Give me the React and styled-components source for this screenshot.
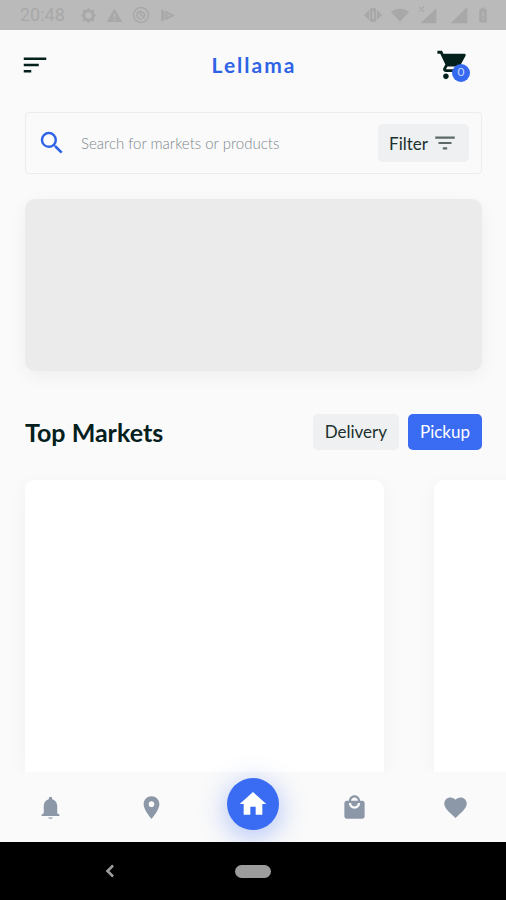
import React from "react";
import styled, { createGlobalStyle } from "styled-components";

const GlobalStyle = createGlobalStyle`
  *, *::before, *::after { box-sizing: border-box; }
  body { margin: 0; background: #fafafa; font-family: Lato, "Open Sans", sans-serif; color: #04201d; }
  button, input { font: inherit; color: inherit; border: 0; margin: 0; padding: 0; background: none; }
  button { cursor: pointer; }
`;

const Screen = styled.div`
  display: flex;
  flex-direction: column;
  min-height: 100vh;
  overflow: hidden;
`;

const StatusBar = styled.div`
  display: flex;
  align-items: center;
  justify-content: space-between;
  height: 30px;
  padding: 0 14px 0 20px;
  background: #bababa;
  color: #a8a8a8;
`;

const StatusGroup = styled.div`
  display: flex;
  align-items: center;
  gap: ${(p) => p.$gap}px;
`;

const Clock = styled.span`
  margin-right: 6px;
  font: 400 18px/30px Roboto, sans-serif;
`;

const Header = styled.header`
  display: grid;
  grid-template-columns: 1fr auto 1fr;
  align-items: center;
  height: 70px;
  padding: 0 36px 0 20px;
`;

const HeaderButton = styled.button`
  display: flex;
  position: relative;
  justify-self: ${(p) => p.$side};
`;

const Brand = styled.h1`
  margin: 0 0 0 18px;
  color: #2f63e6;
  font-size: 21px;
  line-height: 28px;
  font-weight: 700;
  letter-spacing: 2px;
`;

const Badge = styled.span`
  position: absolute;
  right: 0;
  bottom: 0;
  width: 18px;
  height: 18px;
  border-radius: 50%;
  background: #3569f0;
  color: #c9d8ff;
  font-size: 12px;
  line-height: 16px;
  text-align: center;
`;

const Svg = styled.svg`
  display: block;
  flex: none;
  fill: currentColor;
`;

const SearchBar = styled.form`
  display: flex;
  align-items: center;
  height: 62px;
  margin: 12px 24px 0 25px;
  padding: 0 12px 0 11px;
  border: 1px solid #ececec;
  border-radius: 4px;
`;

const SearchLabel = styled.label`
  display: flex;
  color: #2f63e6;
`;

const SearchInput = styled.input`
  flex: 1;
  min-width: 0;
  margin: 0 12px 0 14px;
  font-size: 15px;
  line-height: 24px;
  font-weight: 300;
  outline: none;
  &::placeholder { color: #7d888f; opacity: 1; }
`;

const FilterButton = styled.button`
  display: flex;
  align-items: center;
  gap: 4px;
  height: 38px;
  padding: 0 11px;
  border-radius: 5px;
  background: #eef0f1;
  font-size: 17px;
  color: #20302e;

  svg { color: #5c6967; }
`;

const Banner = styled.section`
  height: 172px;
  margin: 25px 24px 0 25px;
  border-radius: 10px;
  background: #ebebeb;
  box-shadow: 0 5px 18px rgba(0, 0, 0, 0.05);
`;

const SectionHead = styled.div`
  display: flex;
  align-items: center;
  gap: 9px;
  margin: 43px 24px 0 25px;
`;

const SectionTitle = styled.h2`
  flex: 1;
  margin: 0;
  font-size: 25px;
  line-height: 36px;
  font-weight: 700;
`;

const Choice = styled.button`
  height: 36px;
  padding: 0 12px;
  border-radius: 5px;
  background: ${(p) => (p.$active ? "#3a6bf3" : "#eef0f1")};
  color: ${(p) => (p.$active ? "#ffffff" : "#20302e")};
  font-size: 17px;
  line-height: 36px;
`;

const Cards = styled.div`
  display: flex;
  flex: 1;
  gap: 50px;
  min-height: 200px;
  padding: 30px 0 0 25px;
  overflow: hidden;
`;

const Card = styled.article`
  flex: 0 0 359px;
  border-radius: 10px 10px 0 0;
  background: #ffffff;
  box-shadow: 0 4px 20px rgba(0, 0, 0, 0.04);
`;

const TabBar = styled.nav`
  display: grid;
  grid-template-columns: repeat(5, 1fr);
  place-items: center;
  height: 70px;
  background: #fafafa;
  color: #8c98a8;
`;

const Tab = styled.a`
  display: flex;
  color: inherit;
`;

const HomeTab = styled.a`
  display: grid;
  place-items: center;
  width: 52px;
  height: 52px;
  margin-bottom: 6px;
  border-radius: 50%;
  background: #3a6bf3;
  color: #ffffff;
  box-shadow: 0 6px 28px rgba(58, 107, 243, 0.42);
`;

const SystemBar = styled.div`
  display: grid;
  grid-template-columns: 1fr auto 1fr;
  align-items: center;
  height: 58px;
  background: #000000;
  color: #9c9c9c;
`;

const BackButton = styled.button`
  display: flex;
  justify-self: center;
  margin-right: 16px;
`;

const HomePill = styled.button`
  width: 36px;
  height: 13px;
  border-radius: 7px;
  background: #9c9c9c;
`;

const paths = {
  menu: "M3 18h6v-2H3v2zM3 6v2h18V6H3zm0 7h12v-2H3v2z",
  cart: "M7 18c-1.1 0-1.99.9-1.99 2S5.9 22 7 22s2-.9 2-2-.9-2-2-2zM1 2v2h2l3.6 7.59-1.35 2.45c-.16.28-.25.61-.25.96 0 1.1.9 2 2 2h12v-2H7.42c-.14 0-.25-.11-.25-.25l.03-.12.9-1.63h7.45c.75 0 1.41-.41 1.75-1.03l3.58-6.49c.08-.14.12-.31.12-.48 0-.55-.45-1-1-1H5.21l-.94-2H1zm16 16c-1.1 0-1.99.9-1.99 2s.89 2 1.99 2 2-.9 2-2-.9-2-2-2z",
  search: "M15.5 14h-.79l-.28-.27A6.47 6.47 0 0 0 16 9.5 6.5 6.5 0 1 0 9.5 16c1.61 0 3.09-.59 4.23-1.57l.27.28v.79l5 4.99L20.49 19l-4.99-5zm-6 0C7.01 14 5 11.99 5 9.5S7.01 5 9.5 5 14 7.01 14 9.5 11.99 14 9.5 14z",
  filter: "M10 18h4v-2h-4v2zM3 6v2h18V6H3zm3 7h12v-2H6v2z",
  bell: "M12 22c1.1 0 2-.4 2-1.2h-4c0 .8.89 1.2 2 1.2zm6-5v-6c0-3.07-1.64-5.64-4.5-6.32V4c0-.83-.67-1.5-1.5-1.5s-1.5.67-1.5 1.5v.68C7.63 5.36 6 7.92 6 11v6l-2 1.5v1h16v-1L18 17z",
  pin: "M12 2C8.13 2 5 5.13 5 9c0 5.25 7 13 7 13s7-7.75 7-13c0-3.87-3.13-7-7-7zm0 9.5a2.5 2.5 0 0 1 0-5 2.5 2.5 0 0 1 0 5z",
  home: "M10 20v-6h4v6h5v-8h3L12 3 2 12h3v8z",
  bag: "M19 6h-2c0-2.76-2.24-5-5-5S7 3.24 7 6H5c-1.1 0-1.99.9-1.99 2L3 20c0 1.1.9 2 2 2h14c1.1 0 2-.9 2-2V8c0-1.1-.9-2-2-2zm-7-3c1.66 0 3 1.34 3 3H9c0-1.66 1.34-3 3-3zm0 10c-2.76 0-5-2.24-5-5h2c0 1.66 1.34 3 3 3s3-1.34 3-3h2c0 2.76-2.24 5-5 5z",
  heart: "M12 21.35l-1.45-1.32C5.4 15.36 2 12.28 2 8.5 2 5.42 4.42 3 7.5 3c1.74 0 3.41.81 4.5 2.09C13.09 3.81 14.76 3 16.5 3 19.58 3 22 5.42 22 8.5c0 3.78-3.4 6.86-8.55 11.54L12 21.35z",
  back: "M16 7.6 14.2 5.6 7.6 12l6.6 6.4L16 16.4 11.4 12z",
  warning: "M12 2 1 21h22L12 2zm-1 7h2v6h-2V9zm0 8h2v2h-2v-2z",
  wifi: "M12 21 0 8C6 2 18 2 24 8L12 21z",
  signal: "M2 22h20V2z",
  roaming: "M3 22h19V4zM2 2l6 6-1 1-6-6zM8 2 2 8 1 7l6-6z",
  battery: "M15.7 4H14V2h-4v2H8.3C7.6 4 7 4.6 7 5.3v15.4c0 .7.6 1.3 1.3 1.3h7.4c.7 0 1.3-.6 1.3-1.3V5.3c0-.7-.6-1.3-1.3-1.3zM13 18h-2v-2h2v2zm0-4h-2V8h2v6z",
  gear: "M12 1l3 3.500 5-.5-.5 5L23 12l-3.500 3 .5 5-5-.5L12 23l-3-3.500-5 .5.5-5L1 12l3.500-3L4 4l5 .5L12 1zm0 6.500a4.500 4.500 0 1 0 0 9 4.500 4.500 0 0 0 0-9z",
  play: "M3 3l5 3v12l-5 3V3zm6 2 13 7-13 7V5zm3 5v4l4-2-4-2z",
  vibrate: "M7 5 0 12l7 7V5zm10 0v14l7-7-7-7zM8 3h8v18H8V3zm3 4v10h2V7h-2z",
};

function Icon({ name, size }) {
  return (
    <Svg viewBox="0 0 24 24" width={size} height={size} aria-hidden="true">
      <path fillRule="evenodd" d={paths[name]} />
    </Svg>
  );
}

function NoSyncIcon() {
  return (
    <Svg viewBox="0 0 24 24" width="18" height="18" aria-hidden="true">
      <circle cx="12" cy="12" r="10" fill="none" stroke="currentColor" strokeWidth="2" />
      <path d="M7 9a6 6 0 0 1 10 5M7 9v5a5 5 0 0 0 6 3M8 7l9 10" fill="none" stroke="currentColor" strokeWidth="2" />
    </Svg>
  );
}

export default function App() {
  return (
    <>
      <GlobalStyle />
      <Screen>
        <StatusBar>
          <StatusGroup $gap={9}>
            <Clock>20:48</Clock>
            <Icon name="gear" size={17} />
            <Icon name="warning" size={17} />
            <NoSyncIcon />
            <Icon name="play" size={17} />
          </StatusGroup>
          <StatusGroup $gap={11}>
            <StatusGroup $gap={9}>
              <Icon name="vibrate" size={18} />
              <Icon name="wifi" size={18} />
              <Icon name="roaming" size={20} />
            </StatusGroup>
            <StatusGroup $gap={5}>
              <Icon name="signal" size={20} />
              <Icon name="battery" size={18} />
            </StatusGroup>
          </StatusGroup>
        </StatusBar>

        <Header>
          <HeaderButton type="button" aria-label="Menu" $side="start">
            <Icon name="menu" size={30} />
          </HeaderButton>
          <Brand>Lellama</Brand>
          <HeaderButton type="button" aria-label="Cart" $side="end">
            <Icon name="cart" size={34} />
            <Badge>0</Badge>
          </HeaderButton>
        </Header>

        <main>
          <SearchBar role="search" onSubmit={(e) => e.preventDefault()}>
            <SearchLabel htmlFor="search" aria-label="Search">
              <Icon name="search" size={30} />
            </SearchLabel>
            <SearchInput id="search" type="text" placeholder="Search for markets or products" />
            <FilterButton type="button">
              Filter
              <Icon name="filter" size={26} />
            </FilterButton>
          </SearchBar>
          <Banner aria-label="Promotions" />
          <SectionHead>
            <SectionTitle>Top Markets</SectionTitle>
            <Choice type="button" aria-pressed="false">Delivery</Choice>
            <Choice type="button" aria-pressed="true" $active>Pickup</Choice>
          </SectionHead>
        </main>

        <Cards>
          <Card />
          <Card />
        </Cards>

        <TabBar>
          <Tab href="#notifications" aria-label="Notifications"><Icon name="bell" size={27} /></Tab>
          <Tab href="#map" aria-label="Map"><Icon name="pin" size={27} /></Tab>
          <HomeTab href="#home" aria-label="Home"><Icon name="home" size={32} /></HomeTab>
          <Tab href="#orders" aria-label="Orders"><Icon name="bag" size={27} /></Tab>
          <Tab href="#favorites" aria-label="Favorites"><Icon name="heart" size={27} /></Tab>
        </TabBar>

        <SystemBar>
          <BackButton type="button" aria-label="Back"><Icon name="back" size={24} /></BackButton>
          <HomePill type="button" aria-label="Device home" />
        </SystemBar>
      </Screen>
    </>
  );
}
